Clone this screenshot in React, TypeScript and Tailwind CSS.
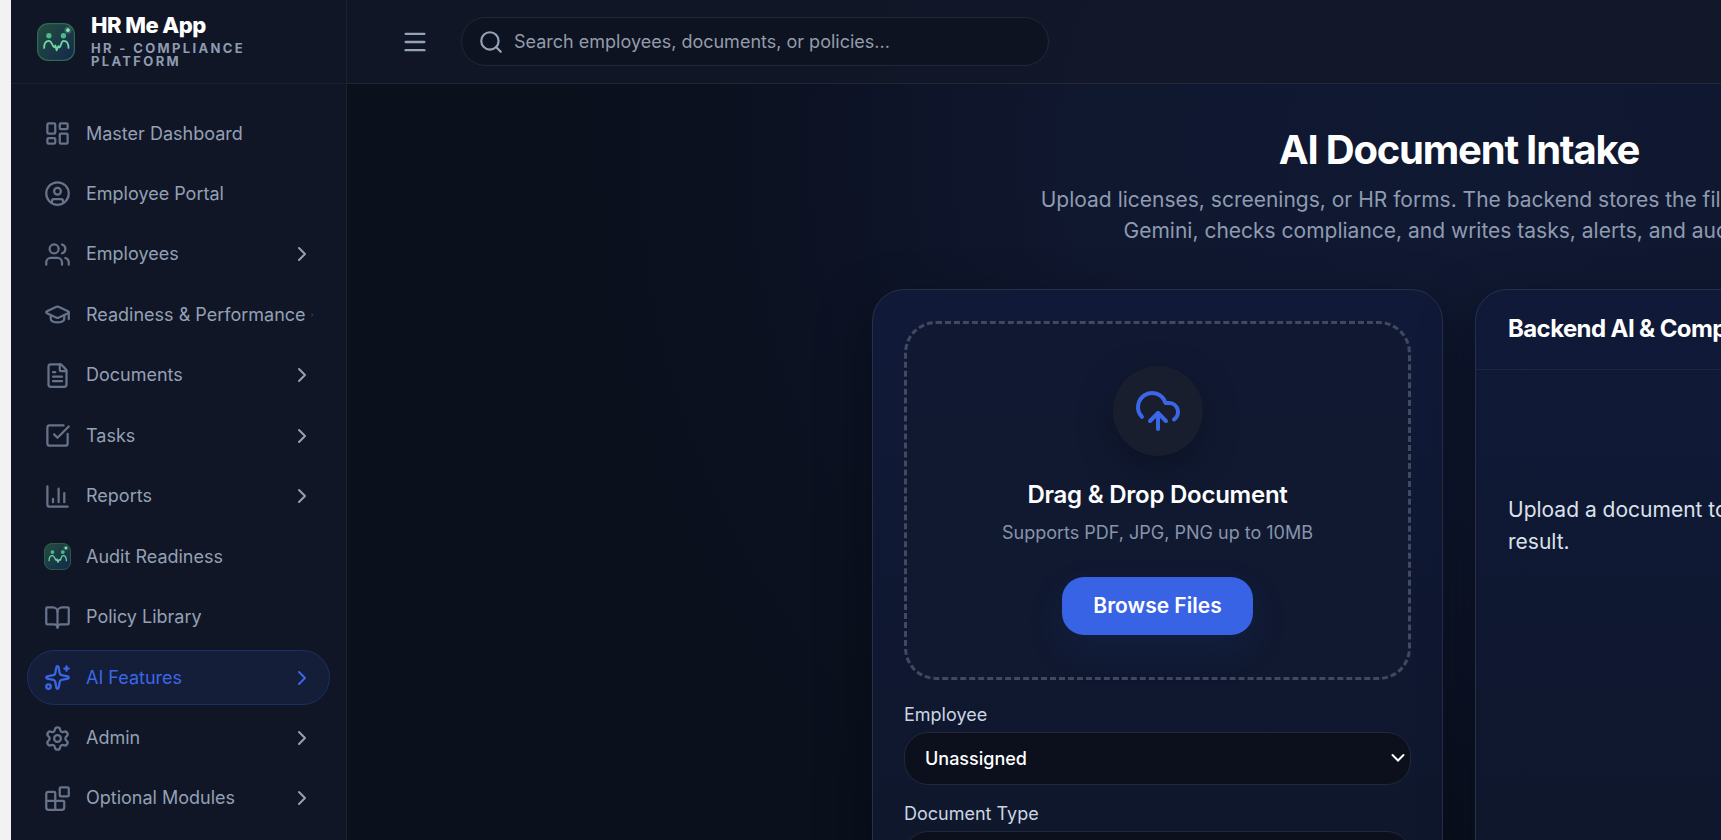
import {
  Blocks,
  BookOpen,
  ChartColumn,
  ChevronRight,
  CircleUser,
  CloudUpload,
  FileText,
  GraduationCap,
  LayoutDashboard,
  Menu,
  Search,
  Settings,
  Sparkles,
  SquareCheckBig,
  Users,
} from 'lucide-react';
import type { ComponentType } from 'react';

type IconProps = { className?: string; strokeWidth?: number };

const BrandMark = ({ className }: IconProps) => (
  <svg viewBox="0 0 64 64" className={className} fill="none" aria-hidden="true">
    <defs>
      <linearGradient id="brand-bg" x1="0" y1="0" x2="1" y2="1">
        <stop offset="0" stopColor="#234f3e" />
        <stop offset="1" stopColor="#14274c" />
      </linearGradient>
    </defs>
    <rect x="1" y="1" width="62" height="62" rx="18" fill="url(#brand-bg)" stroke="#2d6a50" strokeWidth="2" />
    <circle cx="20" cy="21.5" r="4.5" fill="#52b788" />
    <circle cx="44.5" cy="21.5" r="4.5" fill="#52b788" />
    <circle cx="52" cy="12" r="6" fill="#52b788" opacity="0.35" />
    <circle cx="52" cy="12" r="3" fill="#95e8bf" />
    <path
      d="M12 42c0-8 3-12 8-12s6 10 9 11l2-3 2 8 3-7 2 2c3-1 2-11 7-11s8 4 8 12"
      stroke="#6fd8a3"
      strokeWidth="3"
      strokeLinecap="round"
      strokeLinejoin="round"
    />
  </svg>
);

type NavItem = {
  label: string;
  icon: ComponentType<IconProps>;
  expandable?: boolean;
  active?: boolean;
};

const navItems: NavItem[] = [
  { label: 'Master Dashboard', icon: LayoutDashboard },
  { label: 'Employee Portal', icon: CircleUser },
  { label: 'Employees', icon: Users, expandable: true },
  { label: 'Readiness & Performance', icon: GraduationCap, expandable: true },
  { label: 'Documents', icon: FileText, expandable: true },
  { label: 'Tasks', icon: SquareCheckBig, expandable: true },
  { label: 'Reports', icon: ChartColumn, expandable: true },
  { label: 'Audit Readiness', icon: BrandMark },
  { label: 'Policy Library', icon: BookOpen },
  { label: 'AI Features', icon: Sparkles, expandable: true, active: true },
  { label: 'Admin', icon: Settings, expandable: true },
  { label: 'Optional Modules', icon: Blocks, expandable: true },
];

const NavLink = ({ label, icon: Icon, expandable, active }: NavItem) => (
  <a
    href="#"
    className={`flex h-[55px] items-center rounded-full border pr-[15px] pl-4 ${
      active ? 'border-[#1c2f66] bg-[#141e39] text-[#3b66e8]' : 'border-transparent text-[#94a0b5]'
    }`}
  >
    <span className="flex min-w-0 flex-1 items-center overflow-hidden whitespace-nowrap">
      <Icon
        className={`mr-[15px] size-[27px] shrink-0 ${active ? 'text-[#3b66e8]' : 'text-[#66738a]'}`}
        strokeWidth={2}
      />
      <span className="shrink-0 pr-1 text-lg">{label}</span>
      {expandable && <ChevronRight className="ml-auto h-6 w-6 min-w-0" strokeWidth={2} />}
    </span>
  </a>
);

const Sidebar = () => (
  <aside className="flex w-[336px] shrink-0 flex-col border-r border-[#1c2230] bg-[#101625]">
    <div className="flex h-[84px] shrink-0 items-center gap-4 border-b border-[#1c2230] pl-[26px]">
      <BrandMark className="size-[38px] shrink-0" />
      <div className="w-[200px] pb-1">
        <p className="pb-[3px] text-[22px] leading-7 font-extrabold tracking-tight text-white">HR Me App</p>
        <p className="text-[13px] leading-[13px] font-bold tracking-[0.18em] text-[#8f9bb0] uppercase">
          HR - Compliance Platform
        </p>
      </div>
    </div>
    <nav className="flex flex-1 flex-col justify-between px-4 pt-[22px] pb-[14px]">
      {navItems.map((item) => (
        <NavLink key={item.label} {...item} />
      ))}
    </nav>
  </aside>
);

const TopBar = () => (
  <header className="flex h-[84px] shrink-0 items-center gap-8 border-b border-white/7 bg-[#131828]/75 pl-[54px]">
    <button type="button" aria-label="Toggle menu" className="text-[#94a3b8]">
      <Menu className="size-7" strokeWidth={2} />
    </button>
    <label className="flex h-[49px] w-[588px] items-center gap-[10px] rounded-full border border-[#222836] bg-[#0d1320] px-4">
      <Search className="size-[26px] shrink-0 text-[#94a3b8]" strokeWidth={2} />
      <input
        type="text"
        aria-label="Search"
        placeholder="Search employees, documents, or policies..."
        className="w-full bg-transparent text-lg text-white outline-none placeholder:text-[#949baa]"
      />
    </label>
  </header>
);

const selectClass =
  'h-[53px] w-full appearance-none rounded-[24px] border border-[#222836] bg-[#0b101c] pl-5 text-lg font-medium text-white';

const SelectField = ({ id, label, value }: { id: string; label: string; value: string }) => (
  <div>
    <label htmlFor={id} className="block text-lg leading-6 text-[#cbd5e1]">
      {label}
    </label>
    <div className="relative mt-[5px]">
      <select id={id} className={selectClass}>
        <option>{value}</option>
      </select>
      <svg
        viewBox="0 0 14 10"
        className="pointer-events-none absolute top-[21px] right-[6px] h-[10px] w-[14px]"
        fill="none"
        aria-hidden="true"
      >
        <path d="M1.5 2 7 7.5 12.5 2" stroke="#fff" strokeWidth="2" strokeLinecap="round" />
      </svg>
    </div>
  </div>
);

const cardClass =
  'rounded-[32px] border border-[#273048] bg-linear-to-b from-[#101938] to-[#0f172b] shadow-[0_20px_50px_rgba(3,6,14,0.5)]';

const UploadCard = () => (
  <section className={`${cardClass} p-[31px]`}>
    <div className="flex flex-col items-center rounded-[32px] border-3 border-dashed border-[#414860] bg-[#131a30]/70 py-[42px]">
      <div className="flex size-[90px] items-center justify-center rounded-full bg-[#181e2d] shadow-[0_12px_32px_rgba(8,13,28,0.5)]">
        <CloudUpload className="size-12 text-[#3b66e8]" strokeWidth={2} />
      </div>
      <h2 className="mt-[23px] text-2xl leading-8 font-semibold tracking-[-0.01em] text-white">
        Drag &amp; Drop Document
      </h2>
      <p className="mt-[10px] text-lg leading-6 text-[#8794ab]">Supports PDF, JPG, PNG up to 10MB</p>
      <button
        type="button"
        className="mt-8 h-[58px] rounded-[22px] bg-[#3863e5] px-[31px] text-[21px] font-semibold text-white shadow-[0_16px_36px_rgba(30,64,160,0.15)]"
      >
        Browse Files
      </button>
    </div>
    <div className="mt-[23px] flex flex-col gap-[17px]">
      <SelectField id="employee" label="Employee" value="Unassigned" />
      <SelectField id="document-type" label="Document Type" value="Auto-detect" />
    </div>
  </section>
);

const ResultCard = () => (
  <section className={cardClass}>
    <div className="border-b border-[#1d2642] px-8 pt-[23px] pb-[25px]">
      <h2 className="text-2xl leading-[31px] font-bold tracking-tight whitespace-nowrap text-white">
        Backend AI &amp; Compliance Result
      </h2>
    </div>
    <p className="px-8 pt-[124px] text-[21px] leading-8 text-[#dbe1ea]">
      Upload a document to see the backend analysis result.
    </p>
  </section>
);

const App = () => (
  <div className="flex h-screen overflow-hidden bg-[#f2f2f2] pl-[11px] font-[Inter,sans-serif]">
    <Sidebar />
    <div className="min-w-0 flex-1 overflow-hidden bg-[#0a101c]">
      <div className="flex h-full min-w-[2224px] flex-col bg-[radial-gradient(circle_at_50%_150px,#101932_0px,#101830_350px,#0e1428_560px,#0b111f_740px,#0a101c_900px)]">
        <TopBar />
        <main className="flex-1 px-8 pt-[42px]">
          <div className="mx-auto max-w-[1174px]">
            <div className="text-center">
              <h1 className="text-[40px] leading-12 font-bold tracking-[-0.03em] text-white">AI Document Intake</h1>
              <p className="mx-auto mt-[10px] max-w-[860px] text-[21px] leading-[31px] text-[#8f9bb0]">
                Upload licenses, screenings, or HR forms. The backend stores the file, parses it with
                Gemini, checks compliance, and writes tasks, alerts, and audit logs.
              </p>
            </div>
            <div className="mt-[43px] grid grid-cols-2 gap-8">
              <UploadCard />
              <ResultCard />
            </div>
          </div>
        </main>
      </div>
    </div>
  </div>
);

export default App;
